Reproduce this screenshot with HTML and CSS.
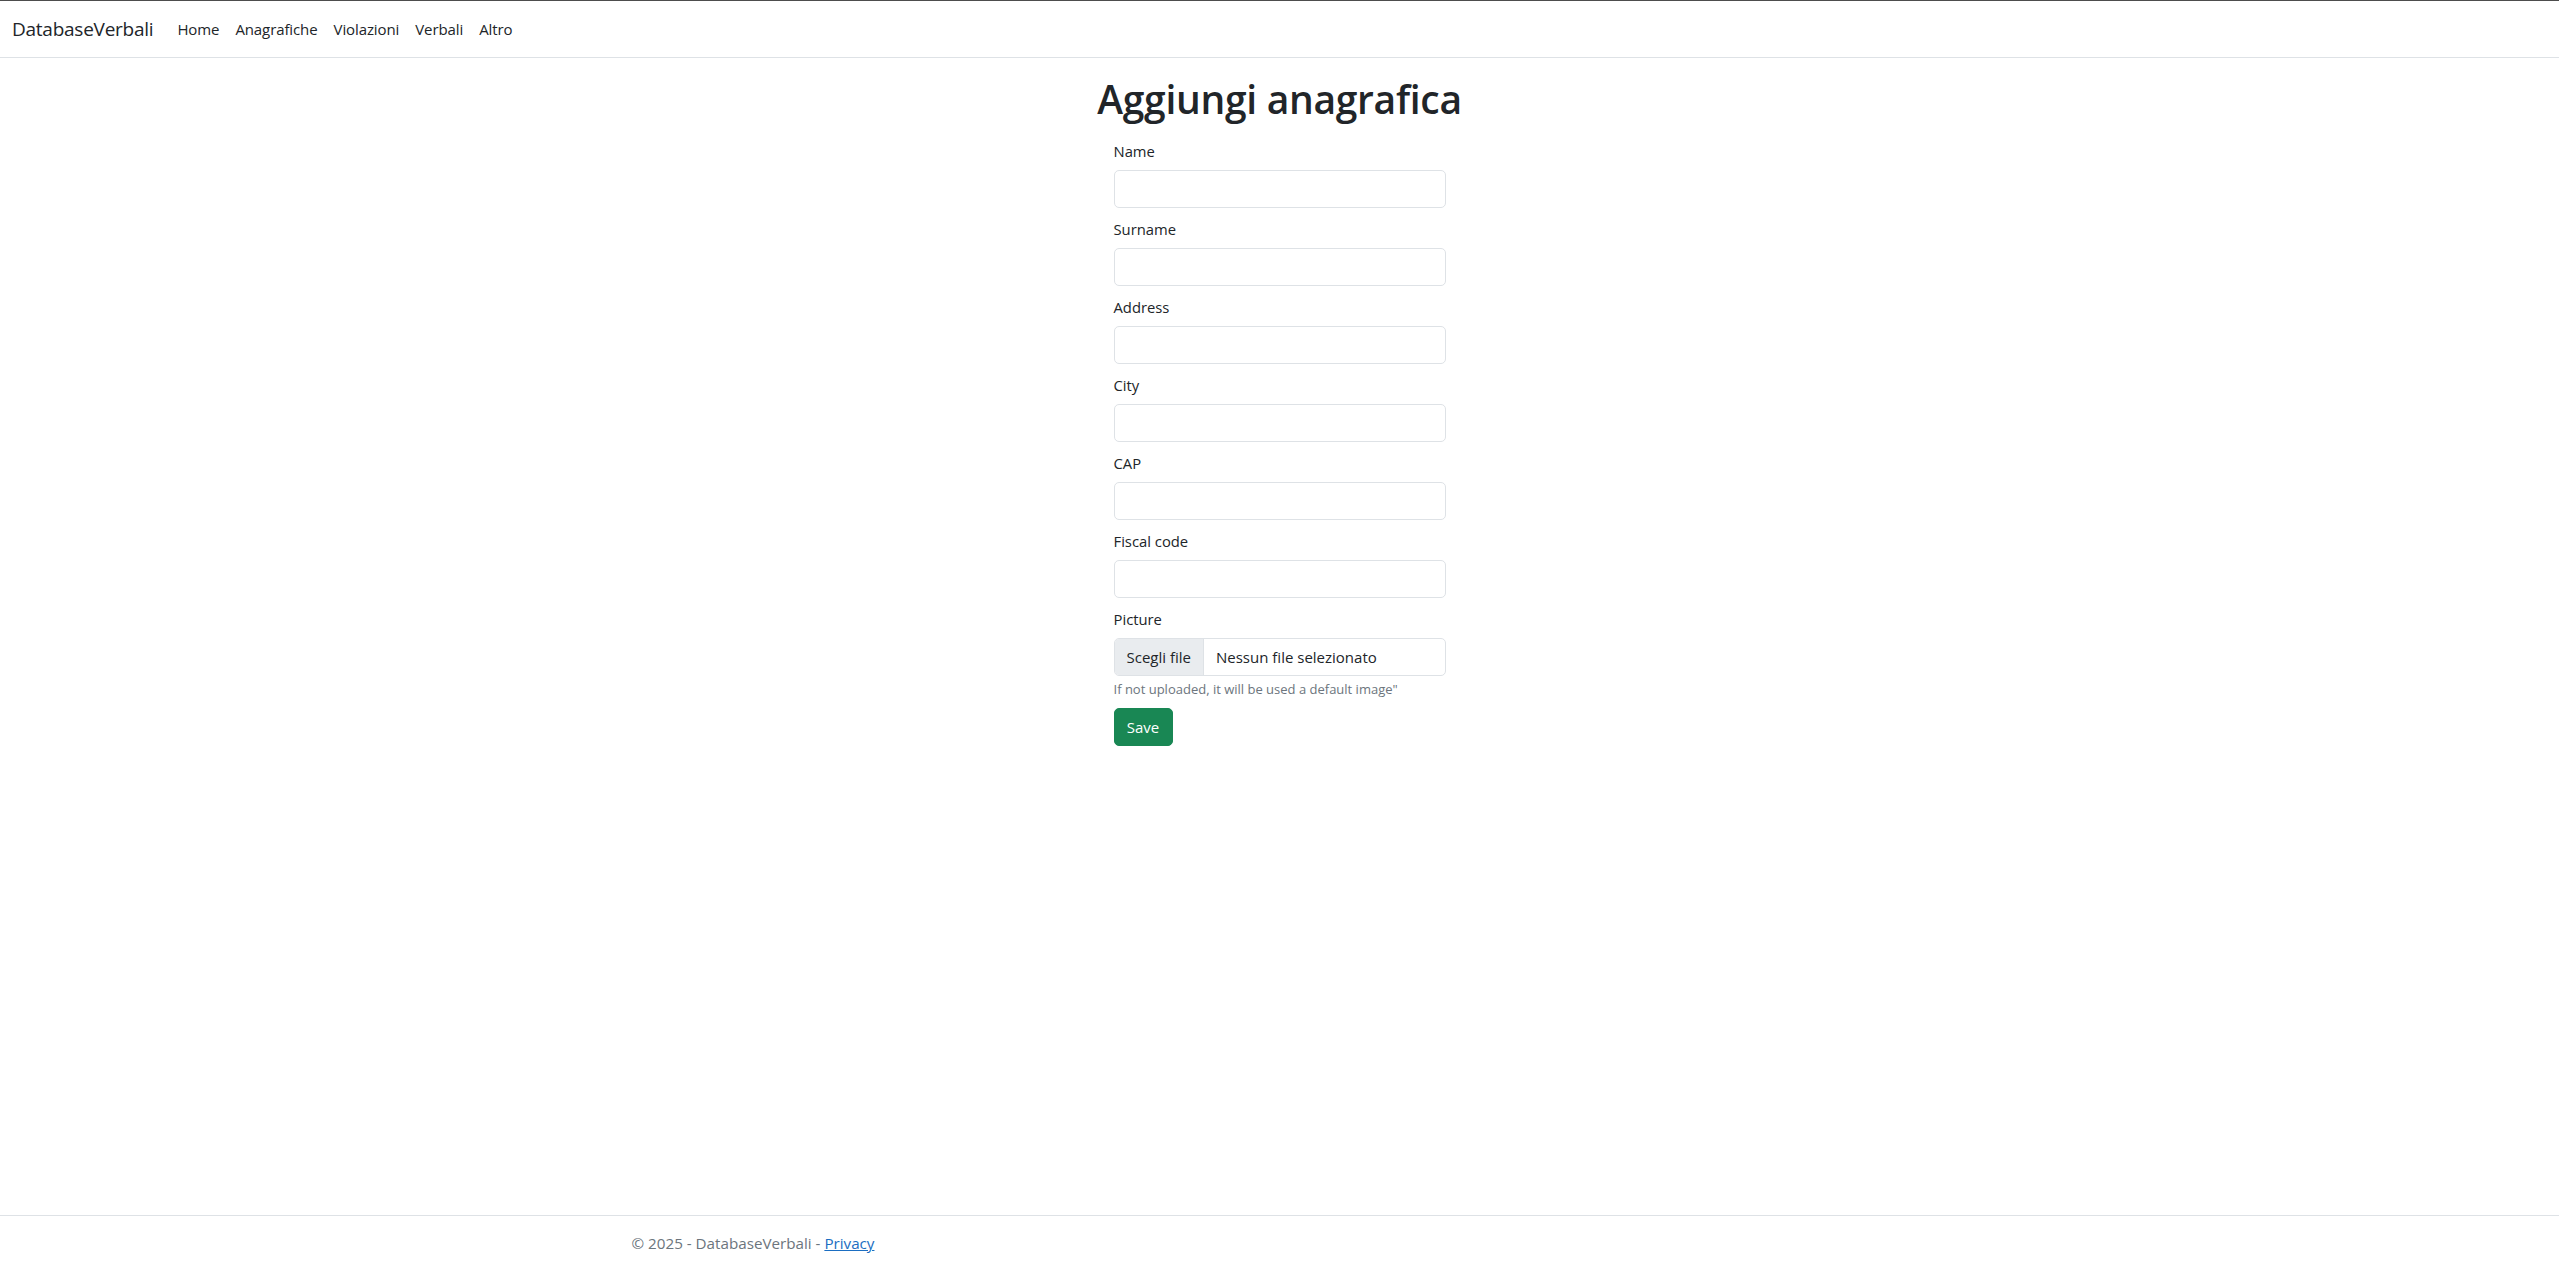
FILE: index.html
```html
<!DOCTYPE html>
<html lang="it">
<head>
<meta charset="utf-8">
<title>Aggiungi anagrafica - DatabaseVerbali</title>
<link rel="stylesheet" href="styles.css">
</head>
<body>
<header class="navbar">
  <div class="navbar-inner">
    <a class="brand" href="#">DatabaseVerbali</a>
    <nav class="nav">
      <a class="nav-link" href="#">Home</a>
      <a class="nav-link" href="#">Anagrafiche</a>
      <a class="nav-link" href="#">Violazioni</a>
      <a class="nav-link" href="#">Verbali</a>
      <a class="nav-link" href="#">Altro</a>
    </nav>
  </div>
</header>
<main class="main">
  <div class="container">
    <h1 class="title">Aggiungi anagrafica</h1>
    <form class="form">
      <div class="group">
        <label class="label">Name</label>
        <input class="control" type="text">
      </div>
      <div class="group">
        <label class="label">Surname</label>
        <input class="control" type="text">
      </div>
      <div class="group">
        <label class="label">Address</label>
        <input class="control" type="text">
      </div>
      <div class="group">
        <label class="label">City</label>
        <input class="control" type="text">
      </div>
      <div class="group">
        <label class="label">CAP</label>
        <input class="control" type="text">
      </div>
      <div class="group">
        <label class="label">Fiscal code</label>
        <input class="control" type="text">
      </div>
      <div class="group group-last">
        <label class="label">Picture</label>
        <div class="file">
          <span class="file-btn">Scegli file</span>
          <span class="file-name">Nessun file selezionato</span>
        </div>
        <div class="help">If not uploaded, it will be used a default image"</div>
      </div>
      <button class="btn-save" type="button">Save</button>
    </form>
  </div>
</main>
<footer class="footer">
  <div class="container">© 2025 - DatabaseVerbali - <a class="footer-link" href="#">Privacy</a></div>
</footer>
</body>
</html>
```
FILE: styles.css
```css
* { box-sizing: border-box; }
html, body { height: 100%; }
body {
  margin: 0;
  font-family: "Open Sans", "Noto Sans", "Liberation Sans", sans-serif;
  font-size: 15px;
  color: #212529;
  background: #fff;
  display: flex;
  flex-direction: column;
  min-height: 100vh;
}
a { text-decoration: none; color: inherit; }

.navbar {
  border-top: 1px solid #4d4d4d;
  border-bottom: 1px solid #dee2e6;
  height: 58px;
  flex: none;
}
.navbar-inner {
  height: 100%;
  display: flex;
  align-items: center;
  padding: 0 12px;
}
.brand {
  font-size: 19px;
  color: #212529;
  margin-right: 16px;
  letter-spacing: -0.25px;
}
.nav { display: flex; }
.nav-link {
  font-size: 15px;
  color: #212529;
  padding: 0 8px;
  letter-spacing: -0.1px;
}

.main { flex: 1 0 auto; }
.container {
  max-width: 1320px;
  margin: 0 auto;
  padding: 0 12px;
}
.title {
  text-align: center;
  font-size: 39px;
  font-weight: 600;
  line-height: 48px;
  margin: 17px 0 18px;
  letter-spacing: -0.3px;
}
.form { width: 332px; margin: 0 auto; }
.group { margin-bottom: 11px; }
.label {
  display: block;
  font-size: 14.8px;
  line-height: 20px;
  margin-bottom: 9px;
}
.control {
  display: block;
  width: 100%;
  height: 38px;
  border: 1px solid #dee2e6;
  border-radius: 5px;
  background: #fff;
  font: inherit;
  padding: 0 12px;
}
.file {
  display: flex;
  height: 38px;
  border: 1px solid #dee2e6;
  border-radius: 5px;
  overflow: hidden;
  font-size: 15px;
}
.file-btn {
  display: flex;
  align-items: center;
  padding: 0 12px;
  background: #e9ecef;
  border-right: 1px solid #dee2e6;
  color: #212529;
}
.file-name {
  display: flex;
  align-items: center;
  padding: 0 12px;
}
.help {
  font-size: 13px;
  color: #6c757d;
  margin-top: 4px;
  line-height: 18px;
}
.group-last { margin-bottom: 10px; }
.btn-save {
  display: block;
  height: 38px;
  width: 59px;
  background: #198754;
  border: 1px solid #198754;
  border-radius: 5px;
  color: #fff;
  font: inherit;
  font-size: 15px;
  padding: 0;
}

.footer {
  flex: none;
  border-top: 1px solid #dee2e6;
  height: 56px;
  line-height: 55px;
  font-size: 15.2px;
  color: #6c757d;
  white-space: nowrap;
}
.footer-link { color: #1b6ec2; text-decoration: underline; }
```
